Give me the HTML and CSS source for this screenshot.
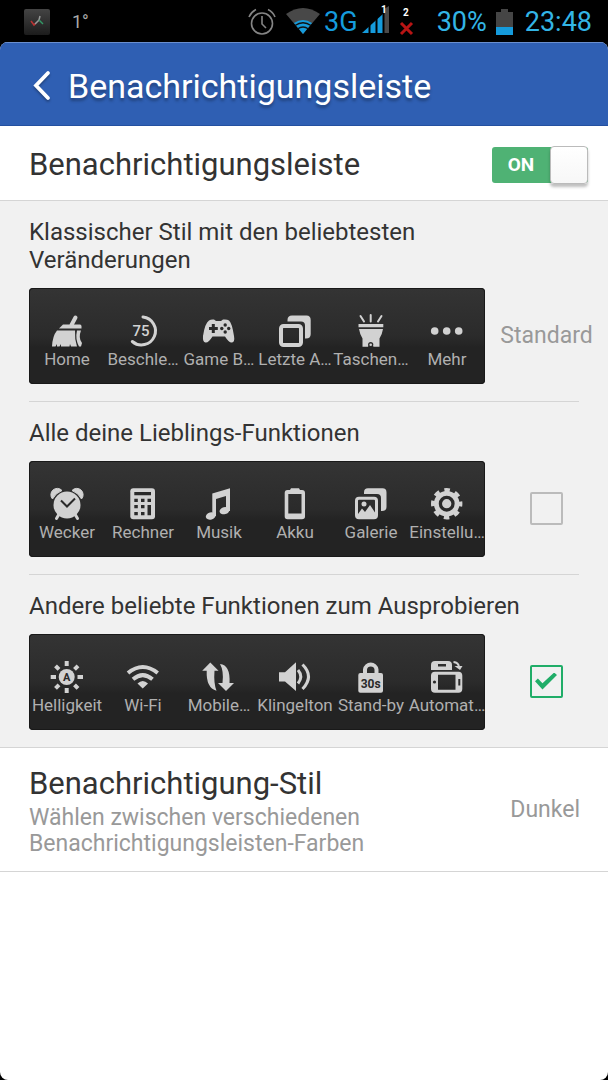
FILE: index.html
```html
<!DOCTYPE html>
<html lang="de">
<head>
<meta charset="utf-8">
<meta name="viewport" content="width=device-width, initial-scale=1">
<title>Benachrichtigungsleiste</title>
<link rel="stylesheet" href="styles.css">
</head>
<body>
<div class="status">
  <svg class="status-app" width="26" height="26" viewBox="0 0 26 26"><defs><linearGradient id="app" x1="0" y1="0" x2="0" y2="1"><stop offset="0" stop-color="#444"/><stop offset="1" stop-color="#1c1c1c"/></linearGradient></defs><rect width="26" height="26" rx="2" fill="url(#app)"/><path d="M7 12l3 4 2-2" stroke="#b33" stroke-width="1.5" fill="none"/><path d="M11 15l4-4 1-4" stroke="#999" stroke-width="1.5" fill="none"/><path d="M15 11l4 4" stroke="#396" stroke-width="1.5" fill="none"/></svg>
  <span class="temp">1°</span>
  <span class="spacer"></span>
  <svg class="s-clock" width="28" height="28" viewBox="0 0 28 28" fill="none" stroke="#858585" stroke-width="1.6"><circle cx="14" cy="15.5" r="10.5"/><path d="M14 8v8l4 4M1 9q2-5 7-7.500M27 9q-2-5-7-7.500"/></svg>
  <svg class="s-wifi" width="34" height="27" viewBox="0 0 34 27"><path d="M17 26L0 6Q17-6 34 6z" fill="#484848"/><path d="M17 26L8 15Q17 9 26 15z" fill="#159bdc"/><path d="M9 17.500Q17 12 25 17.500M11.500 21Q17 17 22.500 21" fill="none" stroke="#111" stroke-width="1.300"/></svg>
  <span class="net">3G</span>
  <svg class="s-signal" width="28" height="30" viewBox="0 0 28 30"><path d="M0 28L22 8V28z" fill="#159bdc"/><path d="M22 4L27 1V28H22z" fill="#4a4a4a"/><path d="M7.500 15v13M14.500 9v19M21.500 4v24" stroke="#000" stroke-width="2"/><text x="19" y="8" class="sim">1</text></svg>
  <svg class="s-sim" width="14" height="28" viewBox="0 0 14 28"><text x="4" y="8" class="sim">2</text><path d="M2 15L13 26M13 15L2 26" stroke="#b81414" stroke-width="3"/></svg>
  <span class="percent">30%</span>
  <svg class="s-batt" width="17" height="26" viewBox="0 0 17 26"><path d="M0 3H5V0H12V3H17V26H0z" fill="#454545"/><path d="M0 18H17V26H0z" fill="#159bdc"/></svg>
  <span class="time">23:48</span>
</div>
<div class="screen">
  <header class="header">
    <button class="back" aria-label="Zurück"><svg width="18" height="30" viewBox="0 0 18 30"><path d="M16 2L4 14.500L16 27" fill="none" stroke="#fff" stroke-width="3.800" stroke-linecap="round"/></svg></button>
    <h1>Benachrichtigungsleiste</h1>
  </header>
  <main>
    <div class="row row-main">
      <label class="row-title" for="enabled">Benachrichtigungsleiste</label>
      <span class="switch"><input type="checkbox" id="enabled" checked><span class="switch-text">ON</span><span class="knob"></span></span>
    </div>
    <div class="sections">
      <section class="section">
        <h2>Klassischer Stil mit den beliebtesten Veränderungen</h2>
        <div class="choice">
          <div class="panel">
            <div class="tile"><svg class="icon" viewBox="0 0 32 32"><path d="M24.500 2.500L20.500 10" class="line w4"/><path d="M8 13.500L12 9.500H29Q30.500 9.500 30.500 11.500V13.500z"/><path d="M6 15.500H24Q23.500 24 26 31.500H20L19 29L18.500 31.500H10V29L8.500 31.500H6V29L4.500 31.500H1Q1.500 21 6 15.500zM26 15.500H30Q27 23 31 28L30 31.500H28Q24 24 26 15.500z"/></svg><span>Home</span></div>
            <div class="tile"><svg class="icon" viewBox="0 0 32 32"><path d="M16 2A14 14 0 1 1 5.300 26.500" class="line w3"/><text x="14" y="21" class="num">75</text></svg><span>Beschle…</span></div>
            <div class="tile"><svg class="icon" viewBox="0 0 32 32"><path d="M6 5.500Q8 4 11 4.500L13 6H18L20 4.500Q24 4 26 5.500Q29 8 31 21Q32 27 29 27.500Q26 28 22 21.500H9.500Q5.500 28 2.500 27.500Q-.5 27 0 21Q2 8 6 5.500z"/><path d="M10.300 9V18M6 13.500H14.800" class="cut w3"/><g class="dark"><circle cx="22.200" cy="10" r="1.700"/><circle cx="22.200" cy="17" r="1.700"/><circle cx="18.800" cy="13.500" r="1.700"/><circle cx="25.700" cy="13.500" r="1.700"/></g></svg><span>Game B…</span></div>
            <div class="tile"><svg class="icon" viewBox="0 0 32 32"><path d="M8.500 5Q8.500 .500 13 .500H27.500Q31.700 .500 31.700 5V19Q31.700 23.500 27 23.500H26V10.500Q26 6.500 22 6.500H8.500z"/><rect x="2" y="11" width="20" height="19" rx="2.500" class="line w4"/></svg><span>Letzte A…</span></div>
            <div class="tile"><svg class="icon" viewBox="0 0 32 32"><path d="M5.500 1L9 6.500M15.700 0V6.500M26.500 1L23 6.500" class="line w2"/><path d="M3.500 9H28.300V12.300H3.500zM4 14H28Q27 20 24.500 23.500V31.700H18.500A2.800 2.800 0 0 0 13 31.700H7.500V23.500Q5 20 4 14z"/><circle cx="15.700" cy="29.500" r="2.600" class="dark"/><circle cx="15.700" cy="29.800" r="1.300"/></svg><span>Taschen…</span></div>
            <div class="tile"><svg class="icon" viewBox="0 0 32 32"><circle cx="3.700" cy="16" r="3.800"/><circle cx="15.700" cy="16" r="3.800"/><circle cx="27.700" cy="16" r="3.800"/></svg><span>Mehr</span></div>
          </div>
          <div class="side"><span class="value">Standard</span></div>
        </div>
      </section>
      <section class="section">
        <h2 id="fav">Alle deine Lieblings-Funktionen</h2>
        <div class="choice">
          <div class="panel">
            <div class="tile"><svg class="icon" viewBox="0 0 32 32"><circle cx="16" cy="17" r="13.500"/><path d="M1.500 11A6 6 0 0 1 11 2.500Q4.500 5 1.500 11zM30.500 11A6 6 0 0 0 21 2.500Q27.500 5 30.500 11z" stroke="#d2d2d2" stroke-width="1"/><path d="M7.500 27L5.500 30.500M24.500 27L26.500 30.500" class="line w3"/><path d="M10 12.500L16 18.500L24 10.500" class="cut w2"/></svg><span>Wecker</span></div>
            <div class="tile"><svg class="icon" viewBox="0 0 32 32"><rect x="3.300" y=".3" width="24.700" height="31" rx="3"/><path class="dark" d="M7.300 4H24V7.300H7.300zM7.300 10.700h3.500v3.300h-3.500zM14 10.700h3.500v3.300H14zM20.500 10.700H24v3.300h-3.500zM7.300 17h3.500v3.300h-3.500zM14 17h3.500v3.300H14zM7.300 24h3.500v3.300h-3.500zM14 24h3.500v3.300H14zM20.500 17H24V27.300h-3.500z"/></svg><span>Rechner</span></div>
            <div class="tile"><svg class="icon" viewBox="0 0 32 32"><path d="M9.300 5.500L27 .3V23H23V8L13 11V28H9.300z"/><ellipse cx="7.700" cy="28" rx="5" ry="3.500" transform="rotate(-15 7.700 28)"/><ellipse cx="21.500" cy="22.700" rx="5" ry="3.500" transform="rotate(-15 21.500 22.700)"/></svg><span>Musik</span></div>
            <div class="tile"><svg class="icon" viewBox="0 0 32 32"><path fill-rule="evenodd" d="M11 2L12 .3H20L21 2H23Q26 2 26 5V28.500Q26 31.300 23 31.300H8.500Q5.700 31.300 5.700 28.500V5Q5.700 2 8.500 2zM9.300 6V25.500H22.500V6z"/></svg><span>Akku</span></div>
            <div class="tile"><svg class="icon" viewBox="0 0 32 32"><path d="M9 4.500Q9 .3 13 .3H27.500Q31.500 .3 31.500 4.500V19Q31.500 23 27 23H26V10Q26 6 22 6H9z"/><rect x="1.500" y="10.200" width="20" height="19.600" rx="2.500" class="line w3"/><circle cx="9" cy="16" r="2.500"/><path d="M3 26L7 20.500L10 24L15 17L21 26V30H3z"/></svg><span>Galerie</span></div>
            <div class="tile"><svg class="icon" viewBox="0 0 32 32"><circle cx="15.700" cy="15.700" r="12.800"/><circle cx="15.700" cy="15.700" r="13.700" fill="none" stroke="#d2d2d2" stroke-width="4" stroke-dasharray="5.500 5.260" stroke-dashoffset="2.750"/><circle cx="15.700" cy="15.700" r="6.300" fill="none" stroke="#2a2a2a" stroke-width="3.300"/></svg><span>Einstellu…</span></div>
          </div>
          <div class="side"><input class="check" type="checkbox" aria-labelledby="fav"></div>
        </div>
      </section>
      <section class="section">
        <h2 id="other">Andere beliebte Funktionen zum Ausprobieren</h2>
        <div class="choice">
          <div class="panel">
            <div class="tile"><svg class="icon" viewBox="0 0 32 32"><circle cx="15.700" cy="16" r="8"/><path class="line w4 butt" d="M15.700 0V5M15.700 27V32M-.3 16H5M26.500 16H32M4.500 4.800L8 8.300M23.500 23.800L27 27.300M27 4.800L23.500 8.300M8 23.800L4.500 27.300"/><text x="15.700" y="20" class="cut-text a">A</text></svg><span>Helligkeit</span></div>
            <div class="tile"><svg class="icon" viewBox="0 0 32 32"><path class="line w4 butt" d="M1 12Q15.700 0 30.700 12M6 18.300Q15.700 10 25.500 18.300"/><path d="M10.500 22.500Q15.700 17.500 21 22.500L15.700 27.500z"/></svg><span>Wi-Fi</span></div>
            <div class="tile"><svg class="icon" viewBox="0 0 32 32"><path d="M7.300 1.500L15.500 9.800H11.500Q10.500 22 13.500 29.700Q3 27 3.700 9.800H-.8zM17 3Q27.500 4 26.500 22H31L23 30L15 22H19.500Q21 10 17 3z"/></svg><span>Mobile…</span></div>
            <div class="tile"><svg class="icon" viewBox="0 0 32 32"><path d="M0 11.300H6L17 1.300V30L6 20.500H0z"/><path class="line w3 butt" d="M19 9Q24.500 15.500 19 22.500M23.500 3.500Q35.500 15.500 23.500 28"/></svg><span>Klingelton</span></div>
            <div class="tile"><svg class="icon" viewBox="0 0 32 32"><path class="line w4 butt" d="M10 13V8.500A5.800 5.800 0 0 1 21.500 8.500V13"/><rect x="3.300" y="12" width="24.700" height="19.700" rx="2"/><text x="15.700" y="26.500" class="cut-text">30s</text></svg><span>Stand-by</span></div>
            <div class="tile"><svg class="icon" viewBox="0 0 32 32"><path fill-rule="evenodd" d="M0 9V4Q0 0 4 0H17Q21 0 21 4V9zM7 3V5.500H15V3z"/><path fill-rule="evenodd" d="M4 10.700H27.500Q31.300 10.700 31.300 14.500V28Q31.300 31.700 27.500 31.700H4Q0 31.700 0 28V14.500Q0 10.700 4 10.700zM7 13.700V28.700H24.500V13.700zM27.300 18V24.500H29.300V18z"/><circle cx="3.500" cy="21" r="1.600" class="dark"/><path class="line w2 butt" d="M22.500 1Q27.500 1.500 28 6"/><path d="M23.500 5H31.500L29 9z"/></svg><span>Automat…</span></div>
          </div>
          <div class="side"><input class="check" type="checkbox" checked aria-labelledby="other"></div>
        </div>
      </section>
    </div>
    <div class="row row-style">
      <div class="style-text"><h2 class="style-title">Benachrichtigung-Stil</h2><p>Wählen zwischen verschiedenen Benachrichtigungsleisten-Farben</p></div>
      <span class="value">Dunkel</span>
    </div>
  </main>
</div>
</body>
</html>
```
FILE: styles.css
```css
* { box-sizing: border-box; }
body {
  margin: 0;
  min-height: 100vh;
  display: flex;
  flex-direction: column;
  background: #000;
  color: #333;
  font-family: Roboto, "Noto Sans", sans-serif;
}
h1, h2, p { margin: 0; font-weight: 400; }
svg { display: block; flex: none; overflow: visible; }

.status {
  height: 42px;
  padding: 1px 16px 0 24px;
  display: flex;
  align-items: center;
  color: #33b5e5;
  font-size: 27px;
  white-space: nowrap;
}
.temp { margin-left: 22px; font-size: 18px; color: #aaa; }
.spacer { flex: 1; }
.s-wifi { margin: 0 4px 0 10px; }
.net { font-size: 27px; color: #159bdc; }
.s-signal { margin: 0 9px 4px 4px; }
.s-sim { margin-right: 24px; }
.s-batt { margin: 0 12px 0 9px; }
.sim { font-size: 10px; font-weight: 700; fill: #fff; }

.screen {
  flex: 1;
  display: flex;
  flex-direction: column;
  overflow: hidden;
  border-radius: 8px;
  background: #fff;
}
.header {
  height: 84px;
  padding: 4px 32px 0;
  display: flex;
  align-items: center;
  gap: 18px;
  background: #2f5fb3;
  border-top: 1px solid #6a8fcf;
  border-bottom: 1px solid #2450a0;
  color: #fff;
}
.header h1 { font-size: 34px; line-height: 42px; text-shadow: 0 3px 3px rgba(0, 0, 0, .3); }
.back { padding: 0; border: 0; background: none; filter: drop-shadow(0 2px 1px rgba(0, 0, 0, .3)); }

.row { display: flex; align-items: center; justify-content: space-between; }
.row-main { height: 75px; padding: 3px 20px 0 29px; border-bottom: 1px solid #d5d5d5; }
.row-title { font-size: 31px; line-height: 38px; }

.switch { position: relative; display: flex; align-items: center; width: 96px; height: 36px; border-radius: 3px; background: #4fb274; }
.switch input { position: absolute; inset: 0; width: 100%; height: 100%; margin: 0; opacity: 0; }
.switch-text { width: 58px; text-align: center; font-size: 19px; font-weight: 700; color: #fff; }
.knob { flex: 1; height: 38px; border: 1px solid #bbb; border-radius: 4px; background: linear-gradient(#fff, #f7f7f7); box-shadow: 0 3px 3px rgba(0, 0, 0, .25); }

.sections { background: #f1f1f1; border-bottom: 1px solid #d5d5d5; }
.section { padding: 17px 0; margin-left: 29px; }
.section + .section { position: relative; }
.section + .section::before { content: ""; position: absolute; top: 0; left: 0; right: 29px; height: 1px; background: #d5d5d5; }
.section h2 { font-size: 24px; line-height: 28px; padding-right: 64px; margin-bottom: 14px; }
.section + .section h2 { margin-top: 1px; }
.choice { display: flex; align-items: center; }
.panel {
  flex: 0 1 456px;
  height: 96px;
  padding-top: 27px;
  display: grid;
  grid-template-columns: repeat(6, minmax(0, 1fr));
  border-radius: 4px;
  box-shadow: inset 0 0 0 1px #191919;
  background: linear-gradient(#343434, #2b2b2b 50%, #232323 62%, #232323);
  color: #b0b0b0;
}
.tile { display: flex; flex-direction: column; align-items: center; font-size: 17px; line-height: 24px; white-space: nowrap; }
.icon { width: 32px; height: 32px; fill: #d2d2d2; }
.line { fill: none; stroke: #d2d2d2; stroke-linecap: round; }
.cut { fill: none; stroke: #2a2a2a; }
.dark { fill: #2a2a2a; }
.w2 { stroke-width: 2; }
.w3 { stroke-width: 3; }
.w4 { stroke-width: 4; }
.butt { stroke-linecap: butt; }
.num { font-size: 15px; font-weight: 500; text-anchor: middle; }
.cut-text { font-size: 12px; font-weight: 700; text-anchor: middle; fill: #2a2a2a; }
.a { font-size: 11px; }

.side { flex: 1; display: flex; justify-content: center; }
.value { font-size: 23px; line-height: 28px; color: #999; }
.check {
  appearance: none;
  width: 33px;
  height: 33px;
  margin: 0 1px 2px 0;
  display: grid;
  place-items: center;
  border: 2px solid #bbb;
  border-radius: 2px;
}
.check:checked { border-color: #20ad68; }
.check:checked::before {
  content: "";
  width: 22px;
  height: 17px;
  background: #20ad68;
  clip-path: polygon(0 52%, 13% 36%, 34% 63%, 87% 0, 100% 15%, 34% 100%);
}

.row-style { padding: 15px 28px 14px 29px; border-bottom: 1px solid #d5d5d5; gap: 24px; }
.style-text { max-width: 400px; }
.style-title { font-size: 31px; line-height: 42px; }
.row-style p { font-size: 23px; line-height: 26px; color: #999; }
```
